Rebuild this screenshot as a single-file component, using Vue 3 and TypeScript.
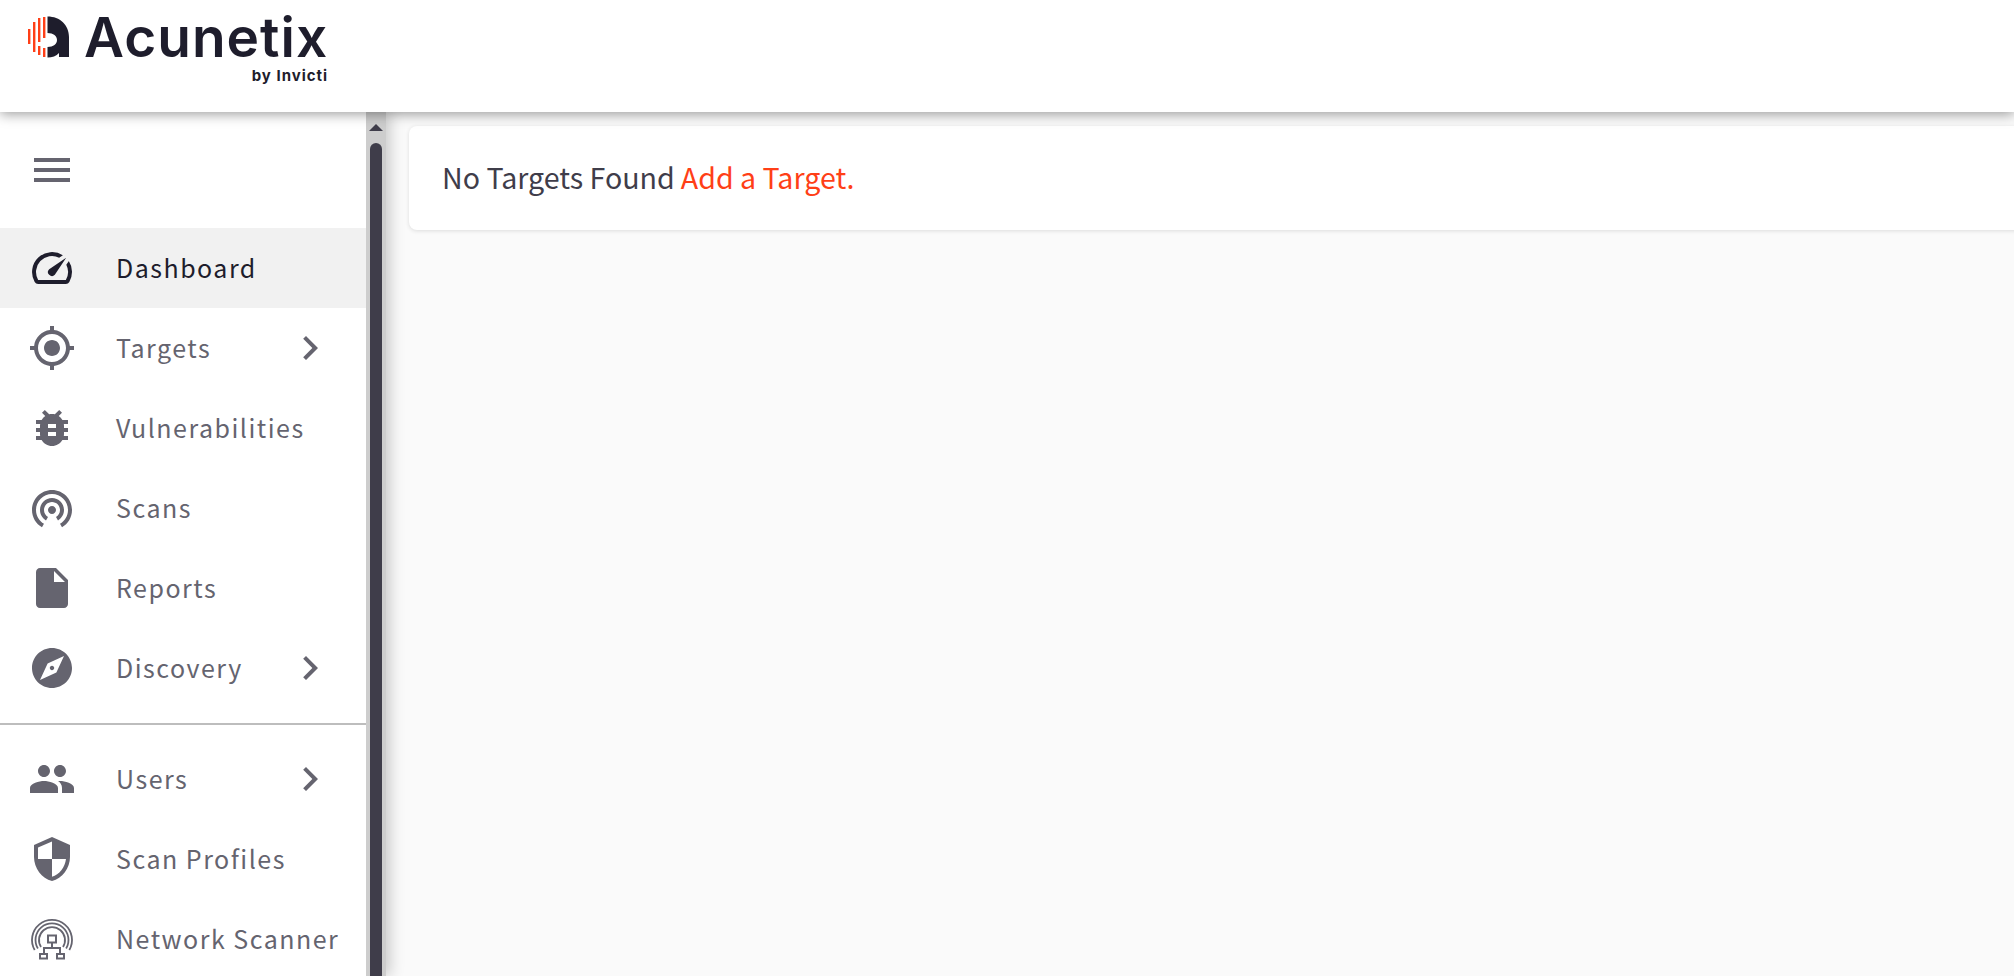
<script setup lang="ts">
interface NavItem {
  label: string
  path?: string
  arrow?: boolean
  active?: boolean
  custom?: boolean
}

const topItems: NavItem[] = [
  {
    label: 'Dashboard',
    active: true,
    path: 'M20.38 8.57l-1.23 1.85a8 8 0 0 1-.22 7.58H5.07A8 8 0 0 1 15.58 6.85l1.85-1.23A10 10 0 0 0 3.35 19a2 2 0 0 0 1.72 1h13.85a2 2 0 0 0 1.74-1 10 10 0 0 0-.27-10.44zm-9.79 6.84a2 2 0 0 0 2.83 0l5.66-8.49-8.49 5.66a2 2 0 0 0 0 2.83z'
  },
  {
    label: 'Targets',
    arrow: true,
    path: 'M12 8c-2.21 0-4 1.79-4 4s1.79 4 4 4 4-1.79 4-4-1.79-4-4-4zm8.94 3c-.46-4.17-3.77-7.48-7.94-7.94V1h-2v2.06C6.83 3.52 3.52 6.83 3.06 11H1v2h2.06c.46 4.17 3.77 7.48 7.94 7.94V23h2v-2.06c4.17-.46 7.48-3.77 7.94-7.94H23v-2h-2.06zM12 19c-3.87 0-7-3.13-7-7s3.13-7 7-7 7 3.13 7 7-3.13 7-7 7z'
  },
  {
    label: 'Vulnerabilities',
    path: 'M20 8h-2.81c-.45-.78-1.07-1.45-1.82-1.96L17 4.41 15.59 3l-2.17 2.17C12.96 5.06 12.49 5 12 5c-.49 0-.96.06-1.41.17L8.41 3 7 4.41l1.62 1.63C7.88 6.55 7.26 7.22 6.81 8H4v2h2.09c-.05.33-.09.66-.09 1v1H4v2h2v1c0 .34.04.67.09 1H4v2h2.81c1.04 1.79 2.97 3 5.19 3s4.15-1.21 5.19-3H20v-2h-2.09c.05-.33.09-.66.09-1v-1h2v-2h-2v-1c0-.34-.04-.67-.09-1H20V8zm-6 8h-4v-2h4v2zm0-4h-4v-2h4v2z'
  },
  {
    label: 'Scans',
    path: 'M12 11c-1.1 0-2 .9-2 2s.9 2 2 2 2-.9 2-2-.9-2-2-2zm6 2c0-3.31-2.69-6-6-6s-6 2.69-6 6c0 2.22 1.21 4.15 3 5.19l1-1.74c-1.19-.7-2-1.97-2-3.45 0-2.21 1.79-4 4-4s4 1.79 4 4c0 1.48-.81 2.75-2 3.45l1 1.74c1.79-1.04 3-2.97 3-5.19zM12 3C6.48 3 2 7.48 2 13c0 3.7 2.01 6.92 4.99 8.65l1-1.73C5.61 18.53 4 15.96 4 13c0-4.42 3.58-8 8-8s8 3.58 8 8c0 2.96-1.61 5.53-4 6.92l1 1.73c2.99-1.73 5-4.95 5-8.65 0-5.52-4.48-10-10-10z'
  },
  {
    label: 'Reports',
    path: 'M6 2c-1.1 0-1.99.9-1.99 2L4 20c0 1.1.89 2 1.99 2H18c1.1 0 2-.9 2-2V8l-6-6H6zm7 7V3.5L18.5 9H13z'
  },
  {
    label: 'Discovery',
    arrow: true,
    path: 'M12 10.9c-.61 0-1.1.49-1.1 1.1s.49 1.1 1.1 1.1c.61 0 1.1-.49 1.1-1.1s-.49-1.1-1.1-1.1zM12 2C6.48 2 2 6.48 2 12s4.48 10 10 10 10-4.48 10-10S17.52 2 12 2zm2.19 12.19L6 18l3.81-8.19L18 6l-3.81 8.19z'
  }
]

const bottomItems: NavItem[] = [
  {
    label: 'Users',
    arrow: true,
    path: 'M16 11c1.66 0 2.99-1.34 2.99-3S17.66 5 16 5c-1.66 0-3 1.34-3 3s1.34 3 3 3zm-8 0c1.66 0 2.99-1.34 2.99-3S9.66 5 8 5C6.34 5 5 6.34 5 8s1.34 3 3 3zm0 2c-2.33 0-7 1.17-7 3.5V19h14v-2.5c0-2.33-4.67-3.5-7-3.5zm8 0c-.29 0-.62.02-.97.05 1.16.84 1.97 1.97 1.97 3.45V19h6v-2.5c0-2.33-4.67-3.5-7-3.5z'
  },
  {
    label: 'Scan Profiles',
    path: 'M12 1L3 5v6c0 5.55 3.84 10.74 9 12 5.16-1.26 9-6.45 9-12V5l-9-4zm0 10.99h7c-.53 4.12-3.28 7.79-7 8.94V12H5V6.3l7-3.11v8.8z'
  },
  { label: 'Network Scanner', custom: true }
]
</script>

<template>
  <div class="page">
    <header class="topbar">
      <div class="logo">
        <svg class="logo-mark" width="44" height="44" viewBox="0 0 44 44">
          <g fill="#ff3f17">
            <rect x="0" y="13" width="2.4" height="15" />
            <rect x="5" y="6" width="2.4" height="30" />
            <rect x="10" y="2" width="2.4" height="24" />
            <rect x="10" y="30" width="2.4" height="9" />
            <rect x="15" y="1" width="2.4" height="21" />
            <rect x="15" y="32" width="2.4" height="9" />
          </g>
          <path
            fill="#1e1d2c"
            d="M19.5 0.5C32 0.5 41 9 41 21V41H31V37C28.5 40 24 41.5 19.5 41.5V31C25.5 31 29 28 29 24C29 20 25.5 17 19.5 17Z"
          />
        </svg>
        <div class="logo-text">
          <span class="logo-name">Acunetix</span>
          <span class="logo-by">by Invicti</span>
        </div>
      </div>
    </header>

    <div class="body">
      <div class="side">
        <nav class="sidebar">
          <div class="menu-row">
            <svg class="icon" viewBox="0 0 24 24"><path d="M3 18h18v-2H3v2zm0-5h18v-2H3v2zm0-7v2h18V6H3z" /></svg>
          </div>
          <ul class="nav">
            <li v-for="item in topItems" :key="item.label" class="nav-item" :class="{ active: item.active }">
              <svg class="icon" viewBox="0 0 24 24"><path :d="item.path" /></svg>
              <span class="nav-label">{{ item.label }}</span>
              <svg v-if="item.arrow" class="icon chevron" viewBox="0 0 24 24"><path d="M10 6L8.59 7.41 13.17 12l-4.58 4.59L10 18l6-6z" /></svg>
            </li>
          </ul>
          <div class="divider"></div>
          <ul class="nav">
            <li v-for="item in bottomItems" :key="item.label" class="nav-item">
              <svg v-if="item.custom" class="icon" viewBox="0 0 48 48">
                <g fill="none" stroke="#65646f" stroke-width="1.8">
                  <path d="M6.700 35A20 20 0 1 1 41.300 35" />
                  <path d="M9.900 33.500A16.500 16.500 0 1 1 38.100 33.500" />
                  <path d="M13 32A13 13 0 1 1 35 32" />
                </g>
                <g fill="none" stroke="#65646f" stroke-width="2">
                  <rect x="20" y="20.500" width="8" height="7" />
                  <path d="M24 28V33M16 38V33H32V38" />
                  <rect x="12" y="39" width="7" height="4.500" />
                  <rect x="29" y="39" width="7" height="4.500" />
                </g>
              </svg>
              <svg v-else class="icon" viewBox="0 0 24 24"><path :d="item.path" /></svg>
              <span class="nav-label">{{ item.label }}</span>
              <svg v-if="item.arrow" class="icon chevron" viewBox="0 0 24 24"><path d="M10 6L8.59 7.41 13.17 12l-4.58 4.59L10 18l6-6z" /></svg>
            </li>
          </ul>
        </nav>
        <div class="scrollbar">
          <span class="scroll-up"></span>
          <span class="scroll-thumb"></span>
        </div>
      </div>

      <main class="content">
        <div class="card">
          <span>No Targets Found</span>
          <a class="link">Add a Target.</a>
        </div>
      </main>
    </div>
  </div>
</template>

<style>
html,
body {
  margin: 0;
  overflow: hidden;
}
</style>

<style scoped>
.page {
  display: flex;
  flex-direction: column;
  height: 976px;
  background: #fafafa;
  font-family: 'Noto Sans CJK SC', 'Noto Sans', sans-serif;
  overflow: hidden;
}

.topbar {
  position: relative;
  z-index: 2;
  flex: 0 0 112px;
  background: #fff;
  box-shadow: 0 2px 12px rgba(0, 0, 0, 0.4);
}

.logo {
  display: flex;
  align-items: flex-start;
  padding: 16px 0 0 28px;
}

.logo-mark {
  flex: none;
}

.logo-text {
  display: flex;
  flex-direction: column;
  align-items: flex-end;
  margin-left: 12px;
}

.logo-name {
  font-family: Inter, sans-serif;
  font-size: 55px;
  font-weight: 600;
  line-height: 42px;
  letter-spacing: 1px;
  color: #1e1d2c;
}

.logo-by {
  margin-top: 8px;
  font-family: Inter, sans-serif;
  font-size: 15px;
  font-weight: 700;
  line-height: 20px;
  letter-spacing: 1px;
  color: #1e1d2c;
}

.body {
  display: flex;
  flex: 1;
  min-height: 0;
}

.side {
  position: relative;
  z-index: 1;
  display: flex;
  flex: 0 0 386px;
  box-shadow: 4px 0 14px rgba(0, 0, 0, 0.2);
}

.sidebar {
  flex: 0 0 366px;
  background: #fff;
  overflow: hidden;
}

.menu-row {
  display: flex;
  align-items: center;
  height: 116px;
  padding-left: 28px;
}

.icon {
  flex: none;
  width: 48px;
  height: 48px;
  fill: #65646f;
}

.nav {
  margin: 0;
  padding: 0;
  list-style: none;
}

.nav-item {
  display: flex;
  align-items: center;
  height: 80px;
  padding-left: 28px;
  font-size: 25px;
  letter-spacing: 1.5px;
  color: #65646f;
}

.nav-item.active {
  background: #f1f1f1;
  color: #1e1d2c;
}

.nav-item.active .icon {
  fill: #1e1d2c;
}

.nav-label {
  margin-left: 40px;
  margin-bottom: 2px;
  white-space: nowrap;
}

.chevron {
  position: absolute;
  left: 286px;
}

.divider {
  height: 2px;
  margin: 15px 0 14px;
  background: #bdbdbd;
}

.scrollbar {
  position: relative;
  flex: 0 0 20px;
  background: #cdcdcd;
}

.scroll-up {
  position: absolute;
  top: 12px;
  left: 3px;
  width: 0;
  height: 0;
  border-right: 7px solid transparent;
  border-bottom: 7px solid #3f3d4a;
  border-left: 7px solid transparent;
}

.scroll-thumb {
  position: absolute;
  top: 31px;
  bottom: 0;
  left: 4px;
  width: 12px;
  border-radius: 6px 6px 0 0;
  background: #3f3d4a;
}

.content {
  flex: 1;
  min-width: 0;
  padding: 14px 0 0 23px;
}

.card {
  display: flex;
  align-items: center;
  gap: 6px;
  height: 104px;
  margin-right: -20px;
  padding: 0 0 3px 33px;
  box-sizing: border-box;
  border-radius: 8px;
  background: #fff;
  box-shadow: 0 1px 4px rgba(0, 0, 0, 0.12);
  font-size: 28.6px;
  color: #3f3d4a;
}

.link {
  color: #ff3f17;
}
</style>
